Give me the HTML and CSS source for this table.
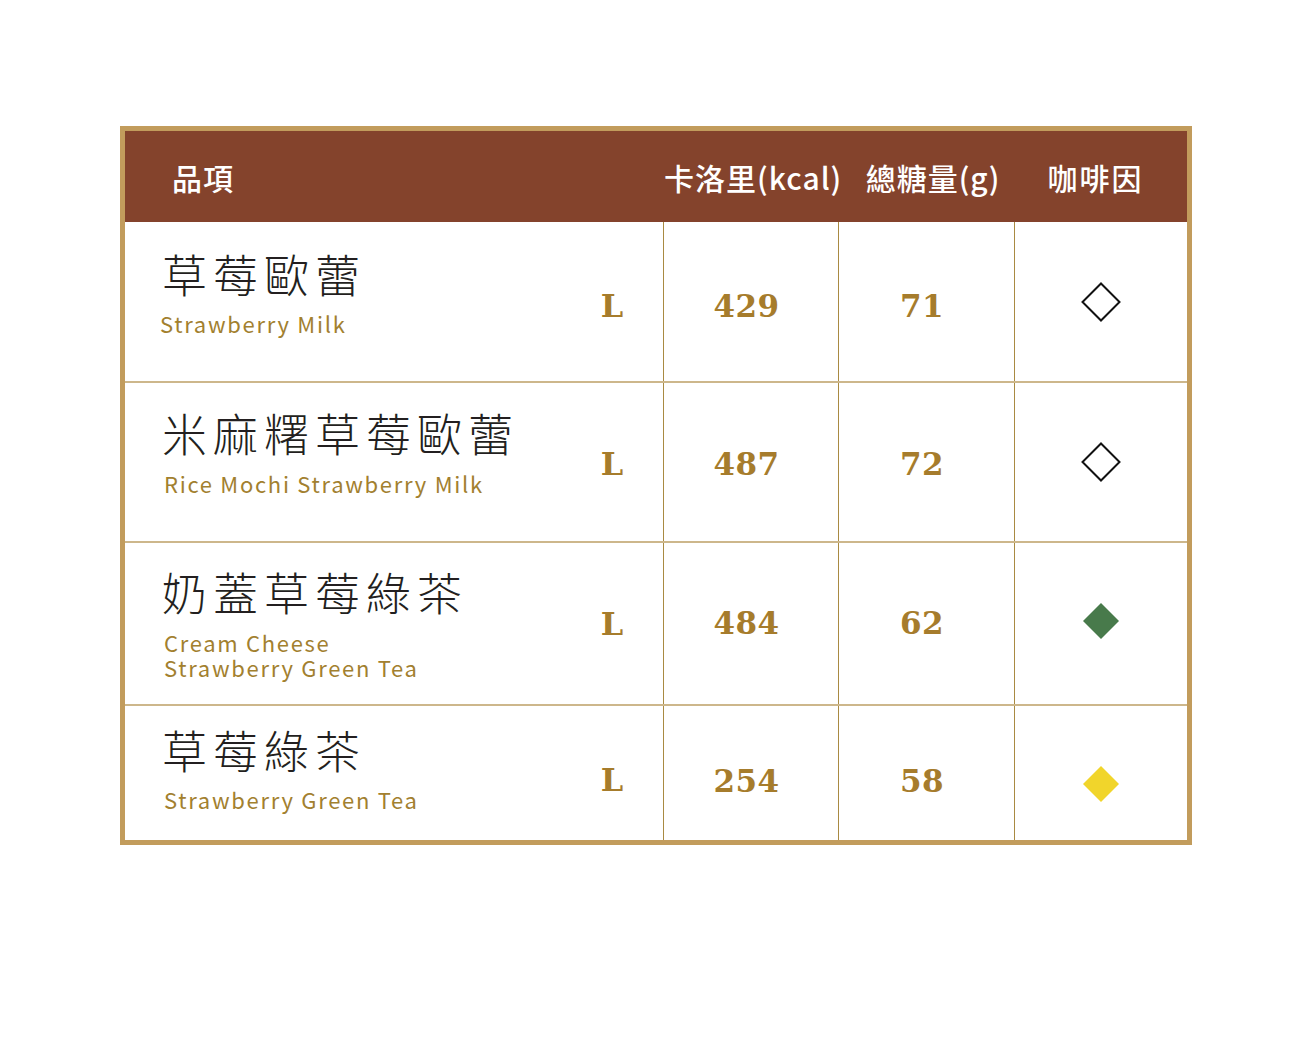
FILE: index.html
```html
<!DOCTYPE html>
<html lang="zh-Hant">
<head>
<meta charset="utf-8">
<title>草莓系列 營養標示</title>
<link rel="stylesheet" href="styles.css">
</head>
<body>
<div class="menu">
  <div class="head">
    <div class="h-item">品項</div>
    <div class="h-col h-kcal">卡洛里(kcal)</div>
    <div class="h-col h-sugar">總糖量(g)</div>
    <div class="h-col h-caf">咖啡因</div>
  </div>

  <div class="row row-1">
    <div class="item">
      <div class="names">
        <div class="zh">草莓歐蕾</div>
        <div class="en en-tight">Strawberry Milk</div>
      </div>
      <div class="size">L</div>
    </div>
    <div class="num">429</div>
    <div class="num">71</div>
    <div class="caf">
      <svg width="40" height="40" viewBox="0 0 40 40"><polygon points="20,1.5 38.5,20 20,38.5 1.5,20" fill="none" stroke="#111" stroke-width="2"/></svg>
    </div>
  </div>

  <div class="row row-2">
    <div class="item">
      <div class="names">
        <div class="zh">米麻糬草莓歐蕾</div>
        <div class="en">Rice Mochi Strawberry Milk</div>
      </div>
      <div class="size">L</div>
    </div>
    <div class="num">487</div>
    <div class="num">72</div>
    <div class="caf">
      <svg width="40" height="40" viewBox="0 0 40 40"><polygon points="20,1.5 38.5,20 20,38.5 1.5,20" fill="none" stroke="#111" stroke-width="2"/></svg>
    </div>
  </div>

  <div class="row row-3">
    <div class="item">
      <div class="names">
        <div class="zh">奶蓋草莓綠茶</div>
        <div class="en">
          <div class="en-line">Cream Cheese</div>
          <div class="en-line">Strawberry Green Tea</div>
        </div>
      </div>
      <div class="size">L</div>
    </div>
    <div class="num">484</div>
    <div class="num">62</div>
    <div class="caf">
      <svg width="40" height="40" viewBox="0 0 40 40"><polygon points="20,2 38,20 20,38 2,20" fill="#487a4b"/></svg>
    </div>
  </div>

  <div class="row row-4">
    <div class="item">
      <div class="names">
        <div class="zh">草莓綠茶</div>
        <div class="en">Strawberry Green Tea</div>
      </div>
      <div class="size">L</div>
    </div>
    <div class="num">254</div>
    <div class="num">58</div>
    <div class="caf">
      <svg width="40" height="40" viewBox="0 0 40 40"><polygon points="20,2 38,20 20,38 2,20" fill="#f1d52b"/></svg>
    </div>
  </div>
</div>
</body>
</html>
```
FILE: styles.css
```css
html, body {
  margin: 0;
  padding: 0;
  background: #ffffff;
}

body {
  font-family: "Noto Sans CJK TC", "Noto Sans", sans-serif;
}

.menu {
  box-sizing: border-box;
  width: 1072px;
  margin: 126px 0 0 120px;
  border: 5px solid #c29c5c;
  background: #fff;
}

.head,
.row {
  display: grid;
  grid-template-columns: 538px 175px 176px 173px;
}

.head {
  height: 91px;
  background: #84432c;
  color: #ffffff;
  font-size: 30px;
  font-weight: 500;
  align-items: center;
}

.h-item {
  padding-left: 47px;
  letter-spacing: 1px;
}

.h-col {
  text-align: center;
  white-space: nowrap;
}

.h-kcal {
  letter-spacing: 1px;
  padding-left: 1px;
}

.h-sugar {
  padding-left: 14px;
  letter-spacing: 1px;
}

.h-caf {
  padding-right: 10px;
  letter-spacing: 2px;
}

.row {
  box-sizing: border-box;
  border-bottom: 2px solid #cdb78b;
}

.row-1 { height: 161px; }
.row-2 { height: 160px; }
.row-3 { height: 163px; }
.row-4 { height: 134px; border-bottom: none; }

.item {
  display: flex;
  padding-left: 37px;
}

.names {
  flex: 1;
  align-self: flex-start;
  padding-top: 29px;
}

.row-2 .names { padding-top: 27px; }
.row-3 .names { padding-top: 26px; }
.row-4 .names { padding-top: 21px; }

.zh {
  font-size: 45px;
  line-height: 1;
  font-weight: 300;
  color: #231f20;
  letter-spacing: 6px;
  white-space: nowrap;
}

.en {
  margin-top: 16px;
  padding-left: 2px;
  font-size: 22px;
  line-height: 25px;
  color: #a2802f;
  letter-spacing: 1.7px;
  white-space: nowrap;
}

.en-line {
  height: 25px;
  line-height: 25px;
}

.en-tight {
  padding-left: 0;
  margin-left: -2px;
  margin-top: 15px;
}

.row-3 .en { margin-top: 16px; }
.row-4 .en { margin-top: 15px; }

.size {
  align-self: center;
  width: 24px;
  margin-right: 39px;
  font-family: "DejaVu Serif", "Liberation Serif", serif;
  font-weight: bold;
  font-size: 32px;
  line-height: 1;
  color: #a67c2c;
  text-align: center;
}

.row-1 .size { margin-top: 8px; }
.row-2 .size { margin-top: 4px; }
.row-3 .size { margin-top: 0; }
.row-4 .size { margin-top: 14px; }

.num,
.caf {
  display: flex;
  align-items: center;
  justify-content: center;
  border-left: 1px solid #a98a42;
}

.num {
  font-family: "DejaVu Serif", "Liberation Serif", serif;
  font-weight: bold;
  font-size: 31px;
  letter-spacing: 0.5px;
  color: #a67c2c;
  padding-right: 9px;
}

.row-1 .num { padding-top: 8px; }
.row-2 .num { padding-top: 4px; }
.row-3 .num { padding-bottom: 2px; }
.row-4 .num { padding-top: 16px; }

.row-3 .caf { padding-bottom: 6px; }
.row-4 .caf { padding-top: 22px; }
```
